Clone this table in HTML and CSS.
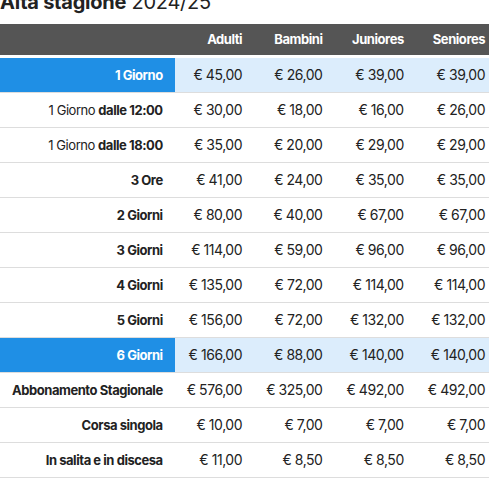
FILE: index.html
```html
<!DOCTYPE html>
<html lang="it">
<head>
<meta charset="utf-8">
<link rel="stylesheet" href="styles.css">
</head>
<body>
<h2 class="title"><strong>Alta stagione</strong> 2024/25</h2>
<table class="prices">
  <thead>
    <tr><th></th><th>Adulti</th><th>Bambini</th><th>Juniores</th><th>Seniores</th></tr>
  </thead>
  <tbody>
    <tr class="hl"><th><b>1 Giorno</b></th><td>€ 45,00</td><td>€ 26,00</td><td>€ 39,00</td><td>€ 39,00</td></tr>
    <tr><th>1 Giorno <b>dalle 12:00</b></th><td>€ 30,00</td><td>€ 18,00</td><td>€ 16,00</td><td>€ 26,00</td></tr>
    <tr><th>1 Giorno <b>dalle 18:00</b></th><td>€ 35,00</td><td>€ 20,00</td><td>€ 29,00</td><td>€ 29,00</td></tr>
    <tr><th><b>3 Ore</b></th><td>€ 41,00</td><td>€ 24,00</td><td>€ 35,00</td><td>€ 35,00</td></tr>
    <tr><th><b>2 Giorni</b></th><td>€ 80,00</td><td>€ 40,00</td><td>€ 67,00</td><td>€ 67,00</td></tr>
    <tr><th><b>3 Giorni</b></th><td>€ 114,00</td><td>€ 59,00</td><td>€ 96,00</td><td>€ 96,00</td></tr>
    <tr><th><b>4 Giorni</b></th><td>€ 135,00</td><td>€ 72,00</td><td>€ 114,00</td><td>€ 114,00</td></tr>
    <tr><th><b>5 Giorni</b></th><td>€ 156,00</td><td>€ 72,00</td><td>€ 132,00</td><td>€ 132,00</td></tr>
    <tr class="hl"><th><b>6 Giorni</b></th><td>€ 166,00</td><td>€ 88,00</td><td>€ 140,00</td><td>€ 140,00</td></tr>
    <tr><th><b>Abbonamento Stagionale</b></th><td>€ 576,00</td><td>€ 325,00</td><td>€ 492,00</td><td>€ 492,00</td></tr>
    <tr><th><b>Corsa singola</b></th><td>€ 10,00</td><td>€ 7,00</td><td>€ 7,00</td><td>€ 7,00</td></tr>
    <tr><th><b>In salita e in discesa</b></th><td>€ 11,00</td><td>€ 8,50</td><td>€ 8,50</td><td>€ 8,50</td></tr>
  </tbody>
</table>
</body>
</html>
```
FILE: styles.css
```css
html, body {
  margin: 0;
  padding: 0;
  overflow: hidden;
  background: #fff;
}
body {
  font-family: Inter, "Noto Sans", sans-serif;
  color: #222;
}
.title {
  margin: -10px 0 10px 0;
  font-size: 20px;
  line-height: 24px;
  font-weight: 400;
  letter-spacing: -0.25px;
  color: #222;
}
.title strong {
  font-weight: 700;
}
.prices {
  border-collapse: collapse;
  font-size: 14px;
  white-space: nowrap;
  letter-spacing: -0.45px;
}
.prices thead th {
  background: #555;
  color: #fff;
  font-weight: 700;
  font-size: 13px;
  line-height: 15px;
  padding: 8px 12px;
  text-align: right;
  border-bottom: 3px solid #fff;
}
.prices tbody th,
.prices tbody td {
  padding: 8px 12px;
  line-height: 18px;
  text-align: right;
  border-bottom: 1px solid #ddd;
}
.prices tbody th {
  font-weight: 400;
  font-size: 13px;
}
.prices tbody th b {
  font-weight: 700;
}
.prices tbody td {
  font-weight: 400;
}
.prices tr.hl th {
  background: #1f8fe5;
  color: #fff;
}
.prices tr.hl td {
  background: #dcedfc;
}
```
